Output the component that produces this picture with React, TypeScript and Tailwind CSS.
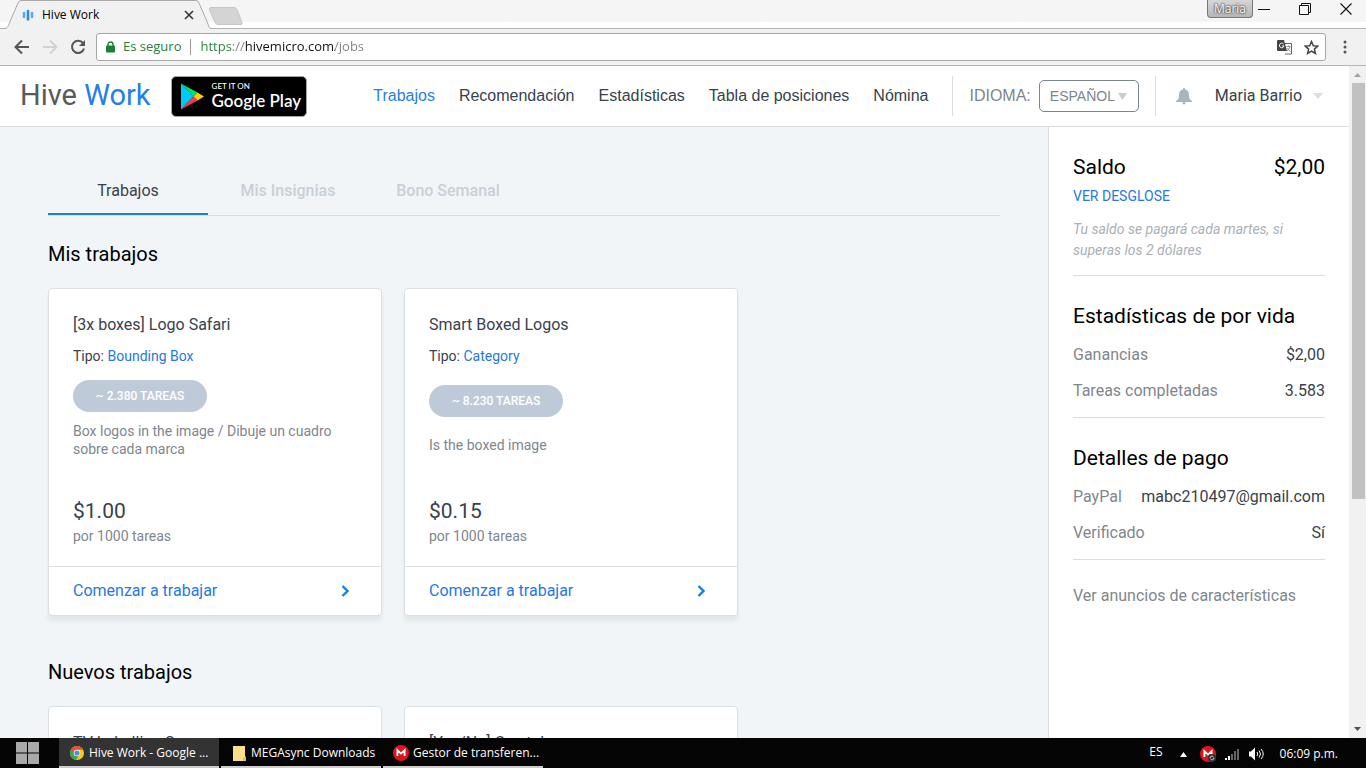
import { useState } from "react";

interface Job {
    title: string;
    type: string;
    tasks: string;
    description: string;
    price: string;
}

const myJobs: Job[] = [
    {
        title: "[3x boxes] Logo Safari",
        type: "Bounding Box",
        tasks: "~ 2.380 TAREAS",
        description: "Box logos in the image / Dibuje un cuadro sobre cada marca",
        price: "$1.00",
    },
    {
        title: "Smart Boxed Logos",
        type: "Category",
        tasks: "~ 8.230 TAREAS",
        description: "Is the boxed image",
        price: "$0.15",
    },
];

const newJobs = ["TV Labelling S", "[Yes/No] Crystal"];
const navItems = ["Trabajos", "Recomendación", "Estadísticas", "Tabla de posiciones", "Nómina"];
const tabs = ["Trabajos", "Mis Insignias", "Bono Semanal"];

const MegaIcon = () => (
    <svg width="16" height="16" viewBox="0 0 16 16">
        <circle cx="8" cy="8" r="8" fill="#dc1420" />
        <path d="M4.4 11V5.2L8 8.6l3.6-3.4V11" fill="none" stroke="#fff" strokeWidth="1.8" />
    </svg>
);

const TabStrip = () => (
    <div className="relative flex h-[29px] shrink-0 items-start border-b border-[#b4b4b4] bg-linear-to-b from-[#f5f5f5] from-80% to-white to-80%">
        <div className="relative ml-1 h-[29px] w-[208px]">
            <svg className="absolute inset-0" width="208" height="29" viewBox="0 0 208 29">
                <path d="M1 29C4 28.5 4 26 5 24L14 3Q15 .5 17 .5H192Q194 .5 195 3L204 24C205 27 205 28.500 208 29Z" fill="#f1f1f1" />
                <path d="M0 28.500C4 28.500 4 26 5 24L14 3Q15 .5 17 .5H192Q194 .5 195 3L204 24C205 27 205 28.500 208 28.500" fill="none" stroke="#a9a9a9" />
            </svg>
            <div className="relative flex h-[29px] items-center pl-[18px] pr-[18px]">
                <svg width="12" height="12" viewBox="0 0 12 12" fill="none" stroke="#2f8ddd" strokeWidth="2.600" strokeLinecap="round">
                    <path d="M2 4v4M10 4v4" stroke="#55aaf0" />
                    <path d="M6 2v8.500" />
                </svg>
                <span className="ml-2 flex-1 text-xs text-black">Hive Work</span>
                <button aria-label="Cerrar pestaña">
                    <svg width="10" height="10" viewBox="0 0 10 10" stroke="#333" strokeWidth="1.6">
                        <path d="M1 1l8 8M9 1l-8 8" />
                    </svg>
                </button>
            </div>
        </div>
        <button aria-label="Nueva pestaña" className="mt-[7px] -ml-1">
            <svg width="36" height="18" viewBox="0 0 36 18">
                <path d="M3 .5h23q2 0 3 2l5 13q.8 2-1 2H10q-2 0-3-2L1.500 3Q1 .5 3 .5z" fill="#d4d4d4" stroke="#c6c6c6" />
            </svg>
        </button>
        <div className="ml-auto flex items-start pr-[14px]">
            <button className="mr-[5px] h-[18px] w-[46px] rounded-b border border-t-0 border-[#777] bg-linear-to-b from-[#d6d6d6] to-[#b6b6b6] text-xs leading-4 text-white [text-shadow:0_0_2px_#333,0_0_2px_#333]">
                Maria
            </button>
            <button aria-label="Minimizar" className="mr-[28px] mt-[3px]">
                <svg width="13" height="13" viewBox="0 0 13 13" stroke="#111">
                    <path d="M0 6.500h12" />
                </svg>
            </button>
            <button aria-label="Restaurar" className="mr-[28px] mt-[3px]">
                <svg width="13" height="13" viewBox="0 0 13 13" fill="none" stroke="#111">
                    <path d="M.5 2.500h9v9h-9zM2.500 2.500v-2h9v9h-2" />
                </svg>
            </button>
            <button aria-label="Cerrar" className="mt-[3px]">
                <svg width="12" height="12" viewBox="0 0 12 12" stroke="#111" strokeWidth="1.1">
                    <path d="M.5.5l11 11M11.500.5l-11 11" />
                </svg>
            </button>
        </div>
    </div>
);

const AddressBar = () => (
    <div className="flex h-[37px] shrink-0 items-center border-b border-[#b6b4b6] bg-[#f1f1f1] pl-[14px] pr-[19px]">
        <button aria-label="Atrás" className="mr-3">
            <svg width="16" height="16" viewBox="0 0 16 16" fill="none" stroke="#555" strokeWidth="2">
                <path d="M15 8H2.500M8 1.500L1.500 8 8 14.500" />
            </svg>
        </button>
        <button aria-label="Adelante" className="mr-3">
            <svg width="16" height="16" viewBox="0 0 16 16" fill="none" stroke="#d2d2d2" strokeWidth="2">
                <path d="M1 8h12.500M8 1.500L14.500 8 8 14.500" />
            </svg>
        </button>
        <button aria-label="Recargar" className="mr-[10px]">
            <svg width="16" height="16" viewBox="0 0 16 16" fill="none" stroke="#555" strokeWidth="2">
                <path d="M13 4.200A6.100 6.100 0 1 0 14 9.500" />
                <path d="M15 1v6H9z" fill="#555" stroke="none" />
            </svg>
        </button>
        <div className="flex h-7 flex-1 items-center rounded-[3px] border border-[#a6a6a6] bg-white px-[6px] text-[13px]">
            <svg className="ml-[3px]" width="9" height="12" viewBox="0 0 9 12">
                <path d="M2 5V3.500a2.500 2.500 0 0 1 5 0V5" fill="none" stroke="#188038" strokeWidth="1.400" />
                <rect y="4.500" width="9" height="7" rx=".8" fill="#188038" />
            </svg>
            <span className="ml-2 text-[#24803c]">Es seguro</span>
            <span className="mx-[9px] h-4 w-px bg-[#9a9a9a]" />
            <input
                aria-label="Dirección"
                defaultValue="https://hivemicro.com/jobs"
                className="min-w-0 flex-1 bg-[linear-gradient(90deg,#24803c_32px,#808080_32px,#808080_45px,#111_45px,#111_135px,#808080_135px)] bg-clip-text text-transparent outline-none"
            />
            <svg className="mr-3" width="15" height="15" viewBox="0 0 15 15">
                <path d="M6 3.500h8.500v10.500H8" fill="#fff" stroke="#666" />
                <path d="M1 0h6l3 11H1q-1 0-1-1V1q0-1 1-1z" fill="#444" />
                <path d="M6.500 4A2.300 2.300 0 1 0 7 6H5" fill="none" stroke="#fff" />
                <path d="M9.500 6.500h4M11.500 5.500v1M13 6.500q-.5 3-3 4.500M10.500 8q1 2.500 3 3.500" fill="none" stroke="#777" strokeWidth=".8" />
            </svg>
            <svg width="15" height="15" viewBox="0 0 15 15" fill="none" stroke="#444" strokeWidth="1.500">
                <path d="M7.500 1.500l1.800 4.200 4.500.4-3.400 3 1 4.400-3.900-2.300-3.900 2.300 1-4.400-3.400-3 4.500-.4z" />
            </svg>
        </div>
        <button aria-label="Menú" className="ml-[17px]">
            <svg width="4" height="14" viewBox="0 0 4 14" fill="#555">
                <circle cx="2" cy="2" r="1.500" />
                <circle cx="2" cy="7" r="1.500" />
                <circle cx="2" cy="12" r="1.500" />
            </svg>
        </button>
    </div>
);

const PlayBadge = () => (
    <a href="#play" className="ml-5 flex h-[41px] w-[136px] items-center rounded-[5px] border border-[#a6a6a6] bg-black pl-2 text-white">
        <svg className="shrink-0" width="25" height="27" viewBox="0 0 25 27">
            <path d="M1 .5v26L13.500 13.500z" fill="#00c8f8" />
            <path d="M1 .5l16.500 9-4 4z" fill="#00e07a" />
            <path d="M1 26.500l16.500-9-4-4z" fill="#f43b4c" />
            <path d="M17.500 9.500l6.500 4-6.500 4-4-4z" fill="#ffcb08" />
        </svg>
        <span className="ml-[7px] flex flex-col font-[Lato,sans-serif] whitespace-nowrap">
            <span className="text-[8px] leading-[9px] font-medium">GET IT ON</span>
            <span className="text-[17px] leading-[20px] font-semibold">Google Play</span>
        </span>
    </a>
);

const Header = () => (
    <header className="flex h-[61px] shrink-0 items-center border-b border-[#dadde1] bg-white pl-5 pr-[26px] text-[#37424c]">
        <a href="#inicio" className="text-[29px] whitespace-nowrap text-[#5a5a5a]">
            Hive <span className="text-[#2680e2]">Work</span>
        </a>
        <PlayBadge />
        <nav className="ml-auto flex gap-6 font-['Liberation_Sans',Arial,sans-serif] whitespace-nowrap">
            {navItems.map((item, index) => (
                <a key={item} href="#nav" className={index === 0 ? "text-[#2680e2]" : ""}>
                    {item}
                </a>
            ))}
        </nav>
        <div className="ml-6 flex h-10 items-center border-x border-[#dadde1] px-4 font-['Liberation_Sans',Arial,sans-serif] text-[#7d858e]">
            <label htmlFor="language">IDIOMA:</label>
            <div className="relative ml-2">
                <select id="language" className="h-8 w-[100px] appearance-none rounded-[5px] border border-[#7d858e] bg-white pl-[10px] text-sm">
                    <option>ESPAÑOL</option>
                    <option>ENGLISH</option>
                </select>
                <svg className="pointer-events-none absolute top-[13px] right-3" width="9" height="7" viewBox="0 0 9 7">
                    <path d="M0 0h9L4.500 7z" fill="#c8cbd0" />
                </svg>
            </div>
        </div>
        <button aria-label="Notificaciones" className="ml-5">
            <svg width="16" height="17" viewBox="0 0 16 17" fill="#a9b4c0">
                <path d="M8 0q1 0 1.200 1.400C12 2 13 4.200 13 7c0 3.600 1 4.800 3 6v1H0v-1c2-1.200 3-2.400 3-6 0-2.800 1-5 3.800-5.600Q7 0 8 0zM6.200 14.300h3.600Q9.500 16.500 8 16.500t-1.800-2.200z" />
            </svg>
        </button>
        <button className="ml-[23px] flex items-center whitespace-nowrap">
            Maria Barrio
            <svg className="ml-[11px]" width="10" height="6" viewBox="0 0 10 6">
                <path d="M0 0h10L5 6z" fill="#dcdee1" />
            </svg>
        </button>
    </header>
);

const JobCard = ({ job }: { job: Job }) => (
    <article className="flex w-[334px] flex-col rounded border border-[#dcdfe3] bg-white text-[#37424c] shadow-[0_5px_4px_rgba(0,0,0,0.06)]">
        <div className="flex flex-col px-6 pt-6 pb-5">
            <h3 className="leading-6">{job.title}</h3>
            <p className="mt-[9px] text-sm">
                Tipo: <a href="#tipo" className="text-[#2878e0]">{job.type}</a>
            </p>
            <div className="mt-[9px] flex h-[88px] flex-col items-start justify-around">
                <span className="flex h-8 w-[134px] items-center justify-center rounded-full bg-[#bfcad9] text-xs font-medium text-white">
                    {job.tasks}
                </span>
                <p className="text-sm leading-[18px] text-[#80868f]">{job.description}</p>
            </div>
            <p className="mt-[34px] text-[21px] leading-7">{job.price}</p>
            <p className="mt-px text-sm text-[#80868f]">por 1000 tareas</p>
        </div>
        <a href="#trabajar" className="flex h-[49px] items-center justify-between border-t border-[#dcdfe3] pl-6 pr-8 text-[#2878e0]">
            Comenzar a trabajar
            <svg width="8" height="12" viewBox="0 0 8 12" fill="none" stroke="#0f82e8" strokeWidth="2.400">
                <path d="M1.500 1l5 5-5 5" />
            </svg>
        </a>
    </article>
);

const InfoRow = ({ label, value }: { label: string; value: string }) => (
    <div className="flex justify-between leading-5">
        <dt className="text-[#80868f]">{label}</dt>
        <dd className="text-[#37424c]">{value}</dd>
    </div>
);

const Sidebar = () => (
    <aside className="w-[301px] shrink-0 border-l border-[#dadde1] bg-white px-6 pt-7">
        <section className="border-b border-[#dadde1] pb-[14px]">
            <h2 className="flex justify-between text-[21px] leading-6 text-black">
                <span>Saldo</span>
                <span>$2,00</span>
            </h2>
            <a href="#desglose" className="mt-[7px] block text-sm text-[#2878e0]">VER DESGLOSE</a>
            <p className="mt-[13px] text-sm leading-[21px] text-[#aab0b7] italic">
                Tu saldo se pagará cada martes, si superas los 2 dólares
            </p>
        </section>
        <section className="border-b border-[#dadde1] pt-7 pb-4">
            <h2 className="text-[21px] leading-6 text-black">Estadísticas de por vida</h2>
            <dl className="mt-[17px] flex flex-col gap-4">
                <InfoRow label="Ganancias" value="$2,00" />
                <InfoRow label="Tareas completadas" value="3.583" />
            </dl>
        </section>
        <section className="border-b border-[#dadde1] pt-7 pb-4">
            <h2 className="text-[21px] leading-6 text-black">Detalles de pago</h2>
            <dl className="mt-[17px] flex flex-col gap-4">
                <InfoRow label="PayPal" value="mabc210497@gmail.com" />
                <InfoRow label="Verificado" value="Sí" />
            </dl>
        </section>
        <a href="#anuncios" className="mt-[26px] block leading-5 text-[#80868f]">Ver anuncios de características</a>
    </aside>
);

const Scrollbar = () => (
    <div className="flex w-[17px] shrink-0 flex-col items-center bg-[#f1f1f1]">
        <svg className="shrink-0" width="17" height="17" viewBox="0 0 17 17">
            <path d="M5 11h7L8.500 7z" fill="#a3a3a3" />
        </svg>
        <div className="ml-px h-[416px] w-[13px] bg-[#c1c1c1]" />
        <svg className="mt-auto shrink-0" width="17" height="17" viewBox="0 0 17 17">
            <path d="M5 6h7l-3.500 4z" fill="#505050" />
        </svg>
    </div>
);

const Taskbar = () => (
    <footer className="flex h-[30px] shrink-0 items-stretch bg-[#050505] text-xs whitespace-nowrap text-white">
        <button aria-label="Inicio" className="pl-4 pr-5">
            <svg width="23" height="22" viewBox="0 0 23 22" fill="#a9a9a9">
                <path d="M0 0h11v10.500H0zM12 0h11v10.500H12zM0 11.500h11V22H0zM12 11.500h11V22H12z" />
            </svg>
        </button>
        <div className="flex gap-[2px]">
            <button className="flex w-40 items-center border-b-2 border-[#ccc] bg-[#333] pt-[2px] pl-[11px]">
                <svg className="mr-[5px]" width="14" height="14" viewBox="0 0 14 14">
                    <circle cx="7" cy="7" r="7" fill="#fbc816" />
                    <path d="M7 7L.9 3.500A7 7 0 0 0 6 13.900L9.500 8.500z" fill="#36a852" />
                    <path d="M.9 3.500A7 7 0 0 1 13.100 3.700H7L4 8.500z" fill="#de5145" />
                    <circle cx="7" cy="7" r="3.300" fill="#fff" />
                    <circle cx="7" cy="7" r="2.600" fill="#4a8af4" />
                </svg>
                Hive Work - Google ...
            </button>
            <button className="flex w-40 items-center border-b-2 border-[#ccc] pt-[2px] pl-3">
                <svg className="mr-[5px]" width="13" height="15" viewBox="0 0 13 15">
                    <path d="M0 0h12v10l1 1v4H0z" fill="#fbe08a" />
                    <path d="M10 11h3v4h-3z" fill="#e9c253" />
                </svg>
                MEGAsync Downloads
            </button>
            <button className="flex w-40 items-center border-b-2 border-[#ccc] pt-[2px] pl-[10px]">
                <span className="mr-1"><MegaIcon /></span>
                Gestor de transferen...
            </button>
        </div>
        <div className="ml-auto flex items-center pt-[2px] pr-7">
            <span className="mb-1">ES</span>
            <svg className="ml-[17px]" width="7" height="5" viewBox="0 0 7 5" fill="#fff">
                <path d="M0 5h7L3.500 0z" />
            </svg>
            <span className="relative ml-[13px]">
                <MegaIcon />
                <svg className="absolute right-0 bottom-0" width="8" height="8" viewBox="0 0 8 8" fill="none" stroke="#ddd">
                    <circle cx="4" cy="4" r="4" fill="#333" stroke="none" />
                    <path d="M2 4a2 2 0 0 1 3.500-1M6 4a2 2 0 0 1-3.500 1" />
                </svg>
            </span>
            <svg className="ml-[9px]" width="16" height="12" viewBox="0 0 16 12" fill="#666">
                <path d="M0 10h2v2H0zM3 8h2v4H3z" fill="#fff" />
                <path d="M6 6h2v6H6zM9 3h2v9H9zM12 1h2v11h-2z" />
            </svg>
            <svg className="ml-2" width="16" height="14" viewBox="0 0 16 14" fill="none" stroke="#fff">
                <path d="M0 4.500h2L6 .5v13l-4-4H0z" fill="#fff" stroke="none" />
                <path d="M8 5q1.500 2 0 4M10 3.500q3 3.500 0 7M12 2q4.500 5 0 10" />
            </svg>
            <span className="ml-[15px]">06:09 p.m.</span>
        </div>
    </footer>
);

const App = () => {
    const [activeTab, setActiveTab] = useState(0);

    return (
        <div className="flex h-screen flex-col overflow-hidden bg-white font-['Open_Sans',sans-serif]">
            <TabStrip />
            <AddressBar />
            <div className="flex min-h-0 flex-1 font-[Roboto,sans-serif]">
                <div className="flex min-w-0 flex-1 flex-col">
                    <Header />
                    <div className="flex min-h-0 flex-1">
                        <main className="min-w-0 flex-1 overflow-hidden bg-[#f1f5f8] px-12 pt-10">
                            <div role="tablist" className="flex h-[49px] border-b border-[#d9dde2]">
                                {tabs.map((tab, index) => (
                                    <button
                                        key={tab}
                                        role="tab"
                                        aria-selected={activeTab === index}
                                        onClick={() => setActiveTab(index)}
                                        className={
                                            activeTab === index
                                                ? "w-40 border-b-2 border-[#2080c8] pt-[2px] text-[#37424c]"
                                                : "w-40 font-medium text-[#c9cfd6]"
                                        }
                                    >
                                        {tab}
                                    </button>
                                ))}
                            </div>
                            <section className="pt-[26px]">
                                <h2 className="text-xl leading-6 text-black">Mis trabajos</h2>
                                <div className="mt-[22px] flex gap-[22px]">
                                    {myJobs.map((job) => (
                                        <JobCard key={job.title} job={job} />
                                    ))}
                                </div>
                            </section>
                            <section className="pt-11">
                                <h2 className="text-xl leading-6 text-black">Nuevos trabajos</h2>
                                <div className="mt-[22px] flex gap-[22px]">
                                    {newJobs.map((title) => (
                                        <article key={title} className="w-[334px] rounded border border-[#dcdfe3] bg-white p-6 text-[#37424c]">
                                            <h3 className="leading-6">{title}</h3>
                                        </article>
                                    ))}
                                </div>
                            </section>
                        </main>
                        <Sidebar />
                    </div>
                </div>
                <Scrollbar />
            </div>
            <Taskbar />
        </div>
    );
};

export default App;
